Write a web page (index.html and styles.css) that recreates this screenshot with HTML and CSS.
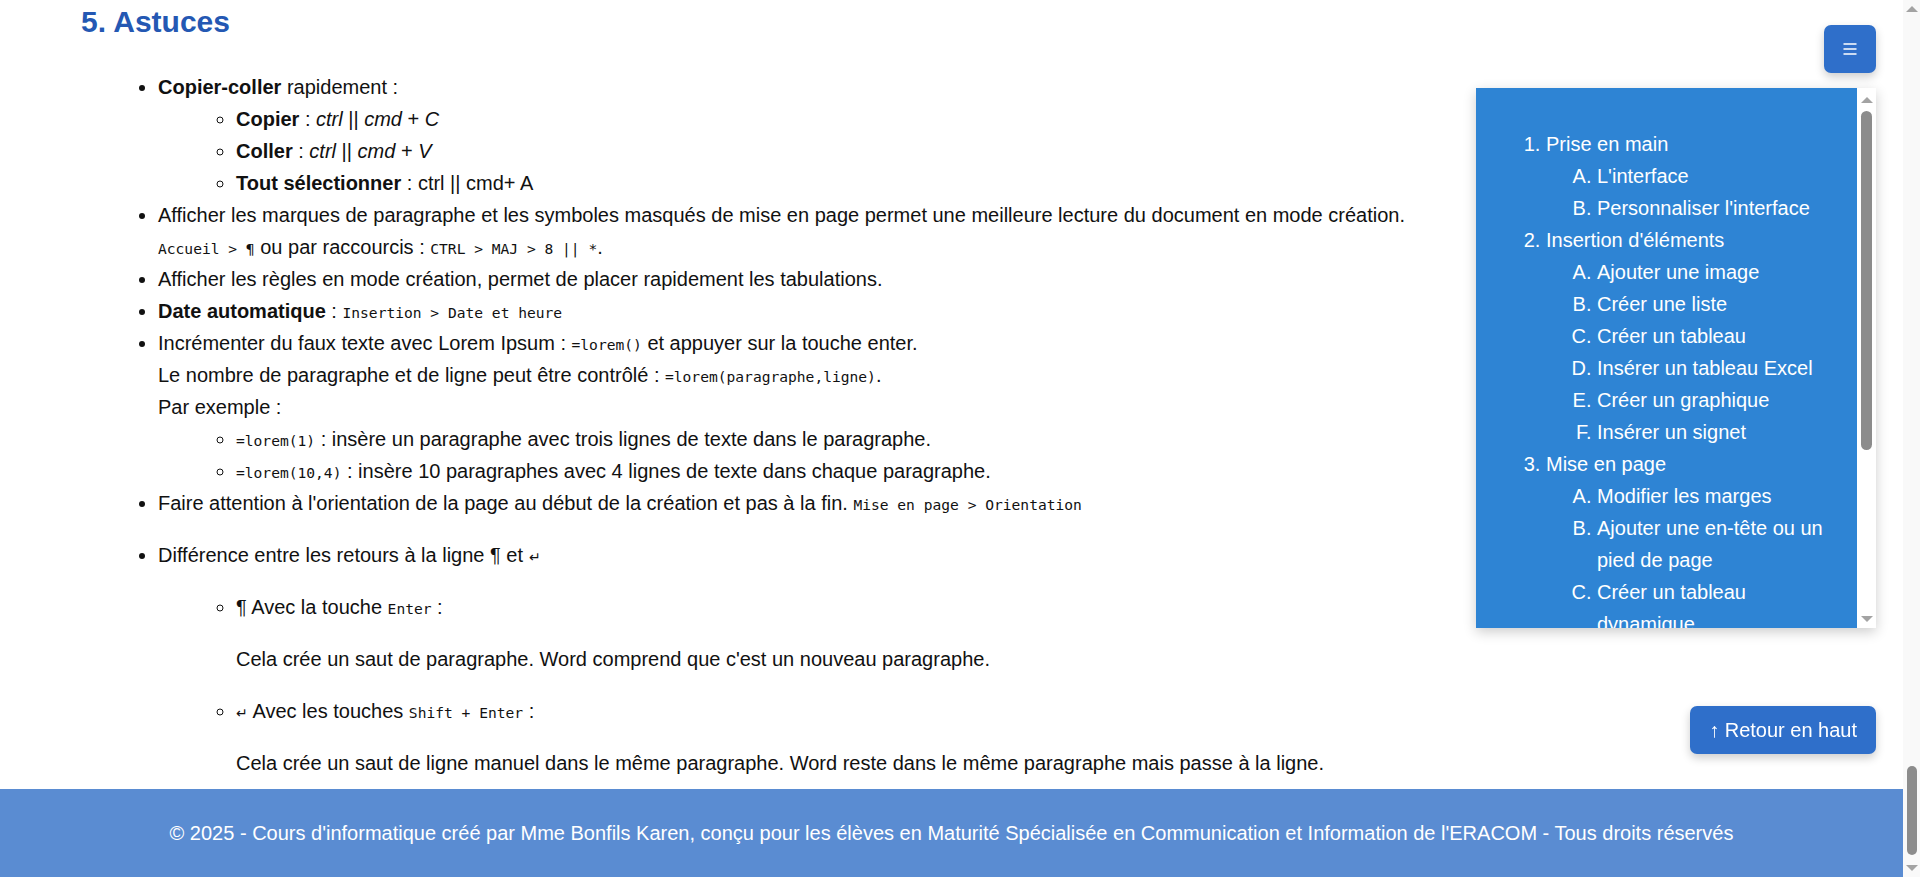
FILE: index.html
```html
<!DOCTYPE html>
<html lang="fr">
<head>
  <meta charset="UTF-8" />
  <meta name="viewport" content="width=device-width, initial-scale=1.0" />
  <title>Cours Word - Astuces</title>
  <link rel="stylesheet" href="styles.css">
</head>
<body>
  <main class="content">
    <section id="astuces">
      <h2>5. Astuces</h2>
      <ul class="tips">
        <li><strong>Copier-coller</strong> rapidement :
          <ul>
            <li><strong>Copier</strong> : <em>ctrl</em> || <em>cmd</em> + <em>C</em></li>
            <li><strong>Coller</strong> : <em>ctrl</em> || <em>cmd</em> + <em>V</em></li>
            <li><strong>Tout sélectionner</strong> : ctrl || cmd+ A</li>
          </ul>
        </li>
        <li>Afficher les marques de paragraphe et les symboles masqués de mise en page permet une meilleure lecture du document en mode création.<br>
          <code>Accueil &gt; ¶</code> ou par raccourcis : <code>CTRL &gt; MAJ &gt; 8 || *</code>.</li>
        <li>Afficher les règles en mode création, permet de placer rapidement les tabulations.</li>
        <li><strong>Date automatique</strong> : <code>Insertion &gt; Date et heure</code></li>
        <li>Incrémenter du faux texte avec Lorem Ipsum : <code>=lorem()</code> et appuyer sur la touche enter.<br>
          Le nombre de paragraphe et de ligne peut être contrôlé : <code>=lorem(paragraphe,ligne)</code>.<br>
          Par exemple :
          <ul>
            <li><code>=lorem(1)</code> : insère un paragraphe avec trois lignes de texte dans le paragraphe.</li>
            <li><code>=lorem(10,4)</code> : insère 10 paragraphes avec 4 lignes de texte dans chaque paragraphe.</li>
          </ul>
        </li>
        <li>Faire attention à l'orientation de la page au début de la création et pas à la fin. <code>Mise en page &gt; Orientation</code></li>
        <li>
          <p>Différence entre les retours à la ligne ¶ et <span class="sym">↵</span></p>
          <ul>
            <li>
              <p>¶ Avec la touche <code>Enter</code> :</p>
              <p>Cela crée un saut de paragraphe. Word comprend que c'est un nouveau paragraphe.</p>
            </li>
            <li>
              <p><span class="sym">↵</span> Avec les touches <code>Shift + Enter</code> :</p>
              <p>Cela crée un saut de ligne manuel dans le même paragraphe. Word reste dans le même paragraphe mais passe à la ligne.</p>
            </li>
          </ul>
        </li>
      </ul>
    </section>
  </main>

  <button class="menu-toggle" aria-label="Sommaire">
    <svg width="14" height="12" viewBox="0 0 14 12">
      <path d="M0.5 1h13M0.5 6h13M0.5 11h13" stroke="#fff" stroke-width="1.6" fill="none"/>
    </svg>
  </button>

  <aside class="toc">
    <nav class="toc-list">
      <ol>
        <li><a href="#">Prise en main</a>
          <ol>
            <li><a href="#">L'interface</a></li>
            <li><a href="#">Personnaliser l'interface</a></li>
          </ol>
        </li>
        <li><a href="#">Insertion d'éléments</a>
          <ol>
            <li><a href="#">Ajouter une image</a></li>
            <li><a href="#">Créer une liste</a></li>
            <li><a href="#">Créer un tableau</a></li>
            <li><a href="#">Insérer un tableau Excel</a></li>
            <li><a href="#">Créer un graphique</a></li>
            <li><a href="#">Insérer un signet</a></li>
          </ol>
        </li>
        <li><a href="#">Mise en page</a>
          <ol>
            <li><a href="#">Modifier les marges</a></li>
            <li><a href="#">Ajouter une en-tête ou un pied de page</a></li>
            <li><a href="#">Créer un tableau dynamique</a></li>
          </ol>
        </li>
      </ol>
    </nav>
    <div class="scrollbar toc-bar">
      <span class="arrow up"></span>
      <div class="track"><span class="thumb"></span></div>
      <span class="arrow down"></span>
    </div>
  </aside>

  <a href="#" class="back-top">↑ Retour en haut</a>

  <footer>
    <p>© 2025 - Cours d'informatique créé par Mme Bonfils Karen, conçu pour les élèves en Maturité Spécialisée en Communication et Information de l'ERACOM - Tous droits réservés</p>
  </footer>

  <div class="scrollbar page-bar">
    <span class="arrow up"></span>
    <div class="track"><span class="thumb"></span></div>
    <span class="arrow down"></span>
  </div>
</body>
</html>
```

FILE: styles.css
```css
body {
  margin: 0;
  padding-right: 17px;
  min-height: 100vh;
  display: flex;
  flex-direction: column;
  font-family: 'Liberation Sans', Arial, sans-serif;
  font-size: 20px;
  line-height: 1.6;
  color: #111;
  background: #fff;
}
.content {
  flex: 1;
  padding: 4px 420px 0 81px;
}
h2 {
  margin: 0;
  font-size: 30px;
  line-height: 36px;
  color: #2458b3;
}
.tips {
  margin: 31px 0 0;
  padding-left: 77px;
}
.tips ul {
  margin: 0;
  padding-left: 78px;
  list-style: circle;
}
.tips p {
  margin: 20px 0;
}
.tips p:last-child {
  margin-bottom: 0;
}
code {
  font-family: 'DejaVu Sans Mono', monospace;
  font-size: 14.6px;
}
.sym {
  font-size: 14px;
}

/* fixed controls */
.menu-toggle {
  position: fixed;
  top: 25px;
  right: 44px;
  width: 52px;
  height: 48px;
  display: flex;
  align-items: center;
  justify-content: center;
  padding: 0;
  border: none;
  border-radius: 7px;
  background: #2f6fca;
  box-shadow: 0 4px 10px rgba(0,0,0,0.2);
  cursor: pointer;
}

.toc {
  position: fixed;
  top: 88px;
  right: 44px;
  width: 400px;
  height: 540px;
  display: flex;
  background: #fff;
  box-shadow: 0 4px 12px rgba(0,0,0,0.2);
}
.toc-list {
  flex: 1;
  padding: 20px;
  overflow: hidden;
  background: #2e84d4;
}
.toc ol {
  margin: 20px 0;
  padding-left: 50px;
}
.toc ol ol {
  margin: 0;
  padding-left: 51px;
  list-style: upper-alpha;
}
.toc li {
  color: #fff;
}
.toc a {
  color: #fff;
  text-decoration: none;
}

.back-top {
  position: fixed;
  right: 44px;
  bottom: 123px;
  height: 48px;
  padding: 0 19px;
  display: flex;
  align-items: center;
  border-radius: 7px;
  background: #2f6fca;
  color: #fff;
  text-decoration: none;
  box-shadow: 0 4px 10px rgba(0,0,0,0.2);
}

footer {
  padding: 28px 0;
  background: #5a8cd2;
  color: #fff;
  text-align: center;
}
footer p {
  margin: 0;
}

/* scrollbars drawn like the classic browser ones */
.scrollbar {
  display: flex;
  flex-direction: column;
  align-items: center;
}
.scrollbar .track {
  flex: 1;
  align-self: stretch;
  display: flex;
  flex-direction: column;
  align-items: center;
}
.scrollbar .thumb {
  border-radius: 6px;
  background: #8c8c8c;
}
.arrow {
  flex: none;
  width: 0;
  height: 0;
  border-left: 6px solid transparent;
  border-right: 6px solid transparent;
}
.arrow.up {
  margin: 6px 0 6px;
  border-bottom: 6px solid #a3a3a3;
}
.arrow.down {
  margin: 6px 0 6px;
  border-top: 6px solid #a3a3a3;
}
.toc-bar {
  width: 19px;
  background: #fff;
}
.toc-bar .arrow.up {
  margin-top: 9px;
  margin-bottom: 6px;
}
.toc-bar .track {
  padding-top: 2px;
}
.toc-bar .thumb {
  width: 11px;
  height: 339px;
}
.page-bar {
  position: fixed;
  top: 0;
  right: 0;
  width: 17px;
  height: 100vh;
  background: #f9f9f9;
}
.page-bar .track {
  justify-content: flex-end;
  padding-bottom: 4px;
}
.page-bar .thumb {
  width: 10px;
  height: 89px;
}
```
